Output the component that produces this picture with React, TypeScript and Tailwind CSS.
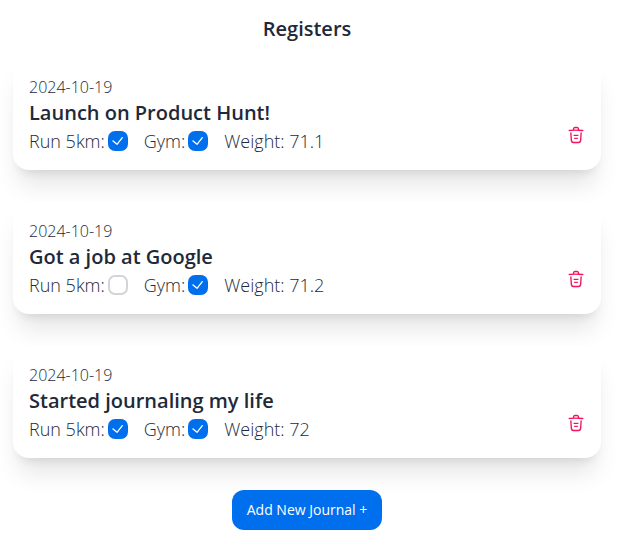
import { useState } from "react";

type Register = {
  id: number;
  date: string;
  title: string;
  run: boolean;
  gym: boolean;
  weight: number;
};

const initialRegisters: Register[] = [
  {
    id: 1,
    date: "2024-10-19",
    title: "Launch on Product Hunt!",
    run: true,
    gym: true,
    weight: 71.1,
  },
  {
    id: 2,
    date: "2024-10-19",
    title: "Got a job at Google",
    run: false,
    gym: true,
    weight: 71.2,
  },
  {
    id: 3,
    date: "2024-10-19",
    title: "Started journaling my life",
    run: true,
    gym: true,
    weight: 72,
  },
];

function TrashIcon() {
  return (
    <svg
      viewBox="0 0 20 20"
      fill="none"
      stroke="currentColor"
      strokeWidth="1.5"
      strokeLinecap="round"
      strokeLinejoin="round"
      className="size-[18px]"
      aria-hidden="true"
    >
      <path d="M17.5 4.983C14.725 4.708 11.933 4.567 9.15 4.567c-1.65 0-3.3.083-4.95.25l-1.7.166" />
      <path d="M7.083 4.142l.184-1.092c.133-.792.233-1.383 1.641-1.383h2.184c1.408 0 1.516.625 1.641 1.391l.184 1.084" />
      <path d="M15.708 7.617l-.541 8.391c-.092 1.309-.167 2.325-2.492 2.325h-5.35c-2.325 0-2.4-1.016-2.492-2.325l-.541-8.391" />
      <path d="M8.608 13.75h2.775" />
      <path d="M7.917 10.417h4.166" />
    </svg>
  );
}

function Check({
  label,
  checked,
  onChange,
}: {
  label: string;
  checked: boolean;
  onChange: () => void;
}) {
  return (
    <label className="flex items-center gap-[3px]">
      {label}
      <span className="relative flex size-5">
        <input
          type="checkbox"
          checked={checked}
          onChange={onChange}
          className="size-5 appearance-none rounded-[7px] border-2 border-[#d4d4d8] checked:border-[#006fee] checked:bg-[#006fee]"
        />
        {checked && (
          <svg
            viewBox="0 0 17 18"
            fill="none"
            stroke="currentColor"
            strokeWidth="2"
            strokeLinecap="round"
            strokeLinejoin="round"
            className="pointer-events-none absolute inset-0 m-auto h-3 w-3 text-white"
            aria-hidden="true"
          >
            <polyline points="1 9 7 14 15 4" />
          </svg>
        )}
      </span>
    </label>
  );
}

export default function App() {
  const [registers, setRegisters] = useState(initialRegisters);

  function toggle(id: number, field: "run" | "gym") {
    setRegisters(
      registers.map((r) => (r.id === id ? { ...r, [field]: !r[field] } : r)),
    );
  }

  function remove(id: number) {
    setRegisters(registers.filter((r) => r.id !== id));
  }

  return (
    <main className="flex flex-col items-center bg-white pt-[15px] pr-[21px] pb-4 pl-[13px] font-['Segoe_UI','Open_Sans','Noto_Sans',sans-serif] text-gray-800">
      <h1 className="text-xl font-semibold">Registers</h1>
      <ul className="mt-[15px] flex w-full flex-col gap-8">
        {registers.map((r) => (
          <li
            key={r.id}
            className="flex justify-between rounded-2xl bg-white px-4 pt-[17px] pb-[15px] shadow-xl"
          >
            <div>
              <p className="text-base font-light">{r.date}</p>
              <h2 className="text-xl font-semibold">{r.title}</h2>
              <div className="flex gap-4 text-lg font-light">
                <Check
                  label="Run 5km:"
                  checked={r.run}
                  onChange={() => toggle(r.id, "run")}
                />
                <Check
                  label="Gym:"
                  checked={r.gym}
                  onChange={() => toggle(r.id, "gym")}
                />
                <p>Weight: {r.weight}</p>
              </div>
            </div>
            <button
              type="button"
              aria-label="Delete"
              onClick={() => remove(r.id)}
              className="flex h-10 items-center self-end text-[#f31260]"
            >
              <TrashIcon />
            </button>
          </li>
        ))}
      </ul>
      <button
        type="button"
        className="mt-8 h-10 rounded-xl bg-[#006fee] px-[15px] text-sm text-white"
      >
        Add New Journal +
      </button>
    </main>
  );
}
